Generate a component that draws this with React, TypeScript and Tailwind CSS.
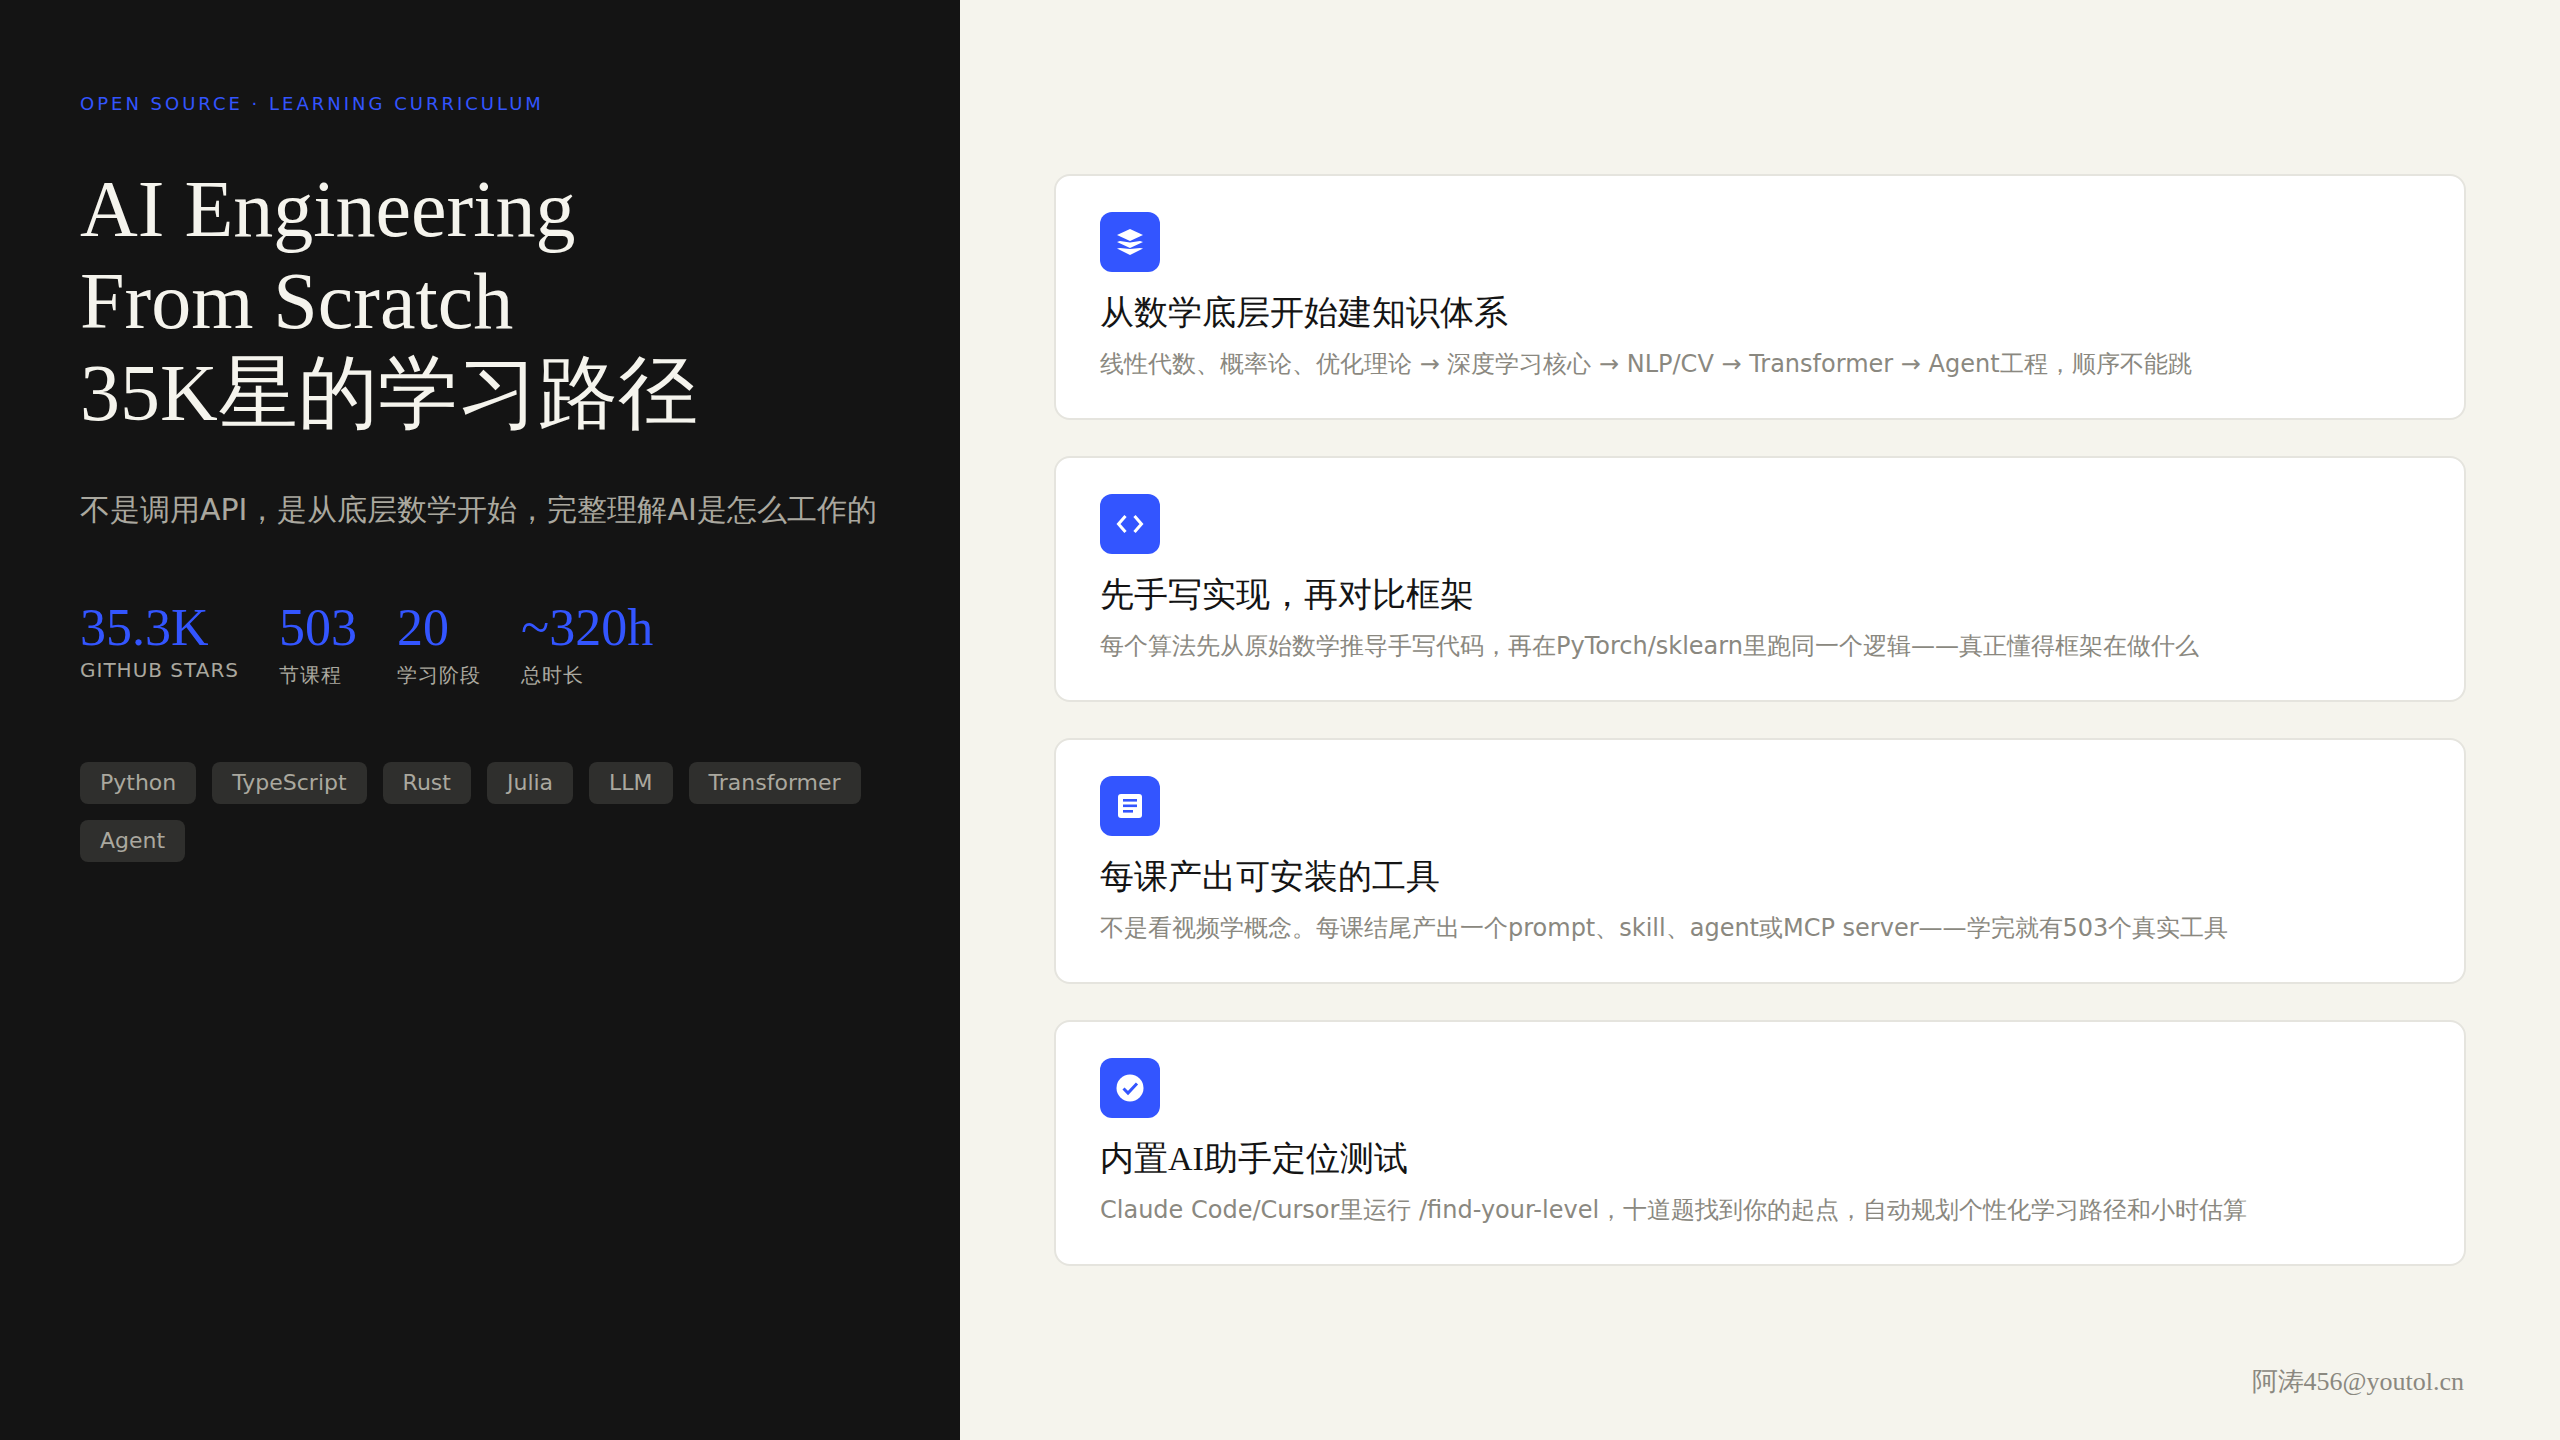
import React from "react";

const serif = "font-['Liberation_Serif',serif]";
const sans = "font-['DejaVu_Sans',sans-serif]";

const stats = [
  { v: "35.3K", l: "GITHUB STARS", cjk: false },
  { v: "503", l: "节课程", cjk: true },
  { v: "20", l: "学习阶段", cjk: true },
  { v: "~320h", l: "总时长", cjk: true },
];
const tags = ["Python", "TypeScript", "Rust", "Julia", "LLM", "Transformer", "Agent"];

const LayersIcon = () => (
  <svg width="28" height="28" viewBox="0 0 28 28" fill="none">
    <path d="M14 1 27 7 14 13 1 7Z" fill="#fff" />
    <path d="M4 13 14 14.5 24 13 27 14 14 20 1 14Z" fill="#fff" />
    <path d="M4 20 14 21 24 20 27 20.5 14 27 1 20.5Z" fill="#fff" />
  </svg>
);
const CodeIcon = () => (
  <svg width="28" height="28" viewBox="0 0 28 28" fill="none" stroke="#fff" strokeWidth="3">
    <path d="M9.5 6 2.5 14l7 8" />
    <path d="M18.5 6l7 8-7 8" />
  </svg>
);
const DocIcon = () => (
  <svg width="28" height="28" viewBox="0 0 28 28" fill="none">
    <rect x="2" y="2" width="24" height="24" rx="3" fill="#fff" />
    <rect x="7" y="7" width="14" height="2.6" fill="#3355ff" />
    <rect x="7" y="12.5" width="14" height="2.6" fill="#3355ff" />
    <rect x="7" y="18" width="10" height="2.6" fill="#3355ff" />
  </svg>
);
const CheckIcon = () => (
  <svg width="28" height="28" viewBox="0 0 28 28" fill="none">
    <circle cx="14" cy="14" r="13.5" fill="#fff" />
    <path d="M7.5 14.5 12 19 21 9.5" stroke="#3355ff" strokeWidth="3" />
  </svg>
);

const cards = [
  { icon: <LayersIcon />, t: "从数学底层开始建知识体系", d: "线性代数、概率论、优化理论 → 深度学习核心 → NLP/CV → Transformer → Agent工程，顺序不能跳" },
  { icon: <CodeIcon />, t: "先手写实现，再对比框架", d: "每个算法先从原始数学推导手写代码，再在PyTorch/sklearn里跑同一个逻辑——真正懂得框架在做什么" },
  { icon: <DocIcon />, t: "每课产出可安装的工具", d: "不是看视频学概念。每课结尾产出一个prompt、skill、agent或MCP server——学完就有503个真实工具" },
  { icon: <CheckIcon />, t: "内置AI助手定位测试", d: "Claude Code/Cursor里运行 /find-your-level，十道题找到你的起点，自动规划个性化学习路径和小时估算" },
];

export default function App() {
  return (
    <div className="flex h-[1440px] w-[2560px] overflow-hidden bg-[#f5f4ed]">
      <aside className="flex w-[960px] shrink-0 flex-col bg-[#141414] px-[80px] pt-[92px]">
        <p className={`${sans} text-[18px] leading-[24px] tracking-[3px] text-[#3355ff]`}>
          OPEN SOURCE · LEARNING CURRICULUM
        </p>
        <h1 className={`${serif} mt-[47px] text-[80px] leading-[92px] font-normal text-[#f5f4ed]`}>
          AI Engineering
          <br />
          From Scratch
          <br />
          35K星的学习路径
        </h1>
        <p className={`${sans} mt-[49px] text-[30px] leading-[44px] text-[#aaa89f]`}>
          不是调用API，是从底层数学开始，完整理解AI是怎么工作的
        </p>
        <div className="mt-[66px] flex gap-[40px]">
          {stats.map((s) => (
            <div key={s.v} className="flex flex-col">
              <span className={`${serif} text-[52px] leading-[59px] text-[#3355ff]`}>{s.v}</span>
              <span className={`${sans} text-[20px] leading-[normal] tracking-[1px] text-[#aaa89f] ${s.cjk ? "mt-[5px]" : "mt-[1px]"}`}>{s.l}</span>
            </div>
          ))}
        </div>
        <div className="mt-[73px] flex flex-wrap gap-[16px]">
          {tags.map((t) => (
            <span key={t} className={`${sans} rounded-[8px] bg-[#2f2f2d] px-[20px] py-[6px] text-[22px] leading-[30px] text-[#aaa89f]`}>
              {t}
            </span>
          ))}
        </div>
      </aside>
      <main className="relative flex flex-1 flex-col justify-center gap-[36px] px-[94px]">
        {cards.map((c) => (
          <section key={c.t} className="rounded-[16px] border-2 border-[#e5e4de] bg-white px-[44px] pt-[36px] pb-[36px]">
            <div className="flex h-[60px] w-[60px] items-center justify-center rounded-[12px] bg-[#3355ff]">{c.icon}</div>
            <h2 className={`${serif} mt-[18px] text-[34px] leading-[46px] font-normal text-[#141414]`}>{c.t}</h2>
            <p className={`${sans} mt-[10px] text-[24px] leading-[36px] text-[#8a8880]`}>{c.d}</p>
          </section>
        ))}
        <div className={`${serif} absolute right-[96px] bottom-[40px] text-[26px] leading-[36px] text-[#8a8880]`}>阿涛456@youtol.cn</div>
      </main>
    </div>
  );
}
